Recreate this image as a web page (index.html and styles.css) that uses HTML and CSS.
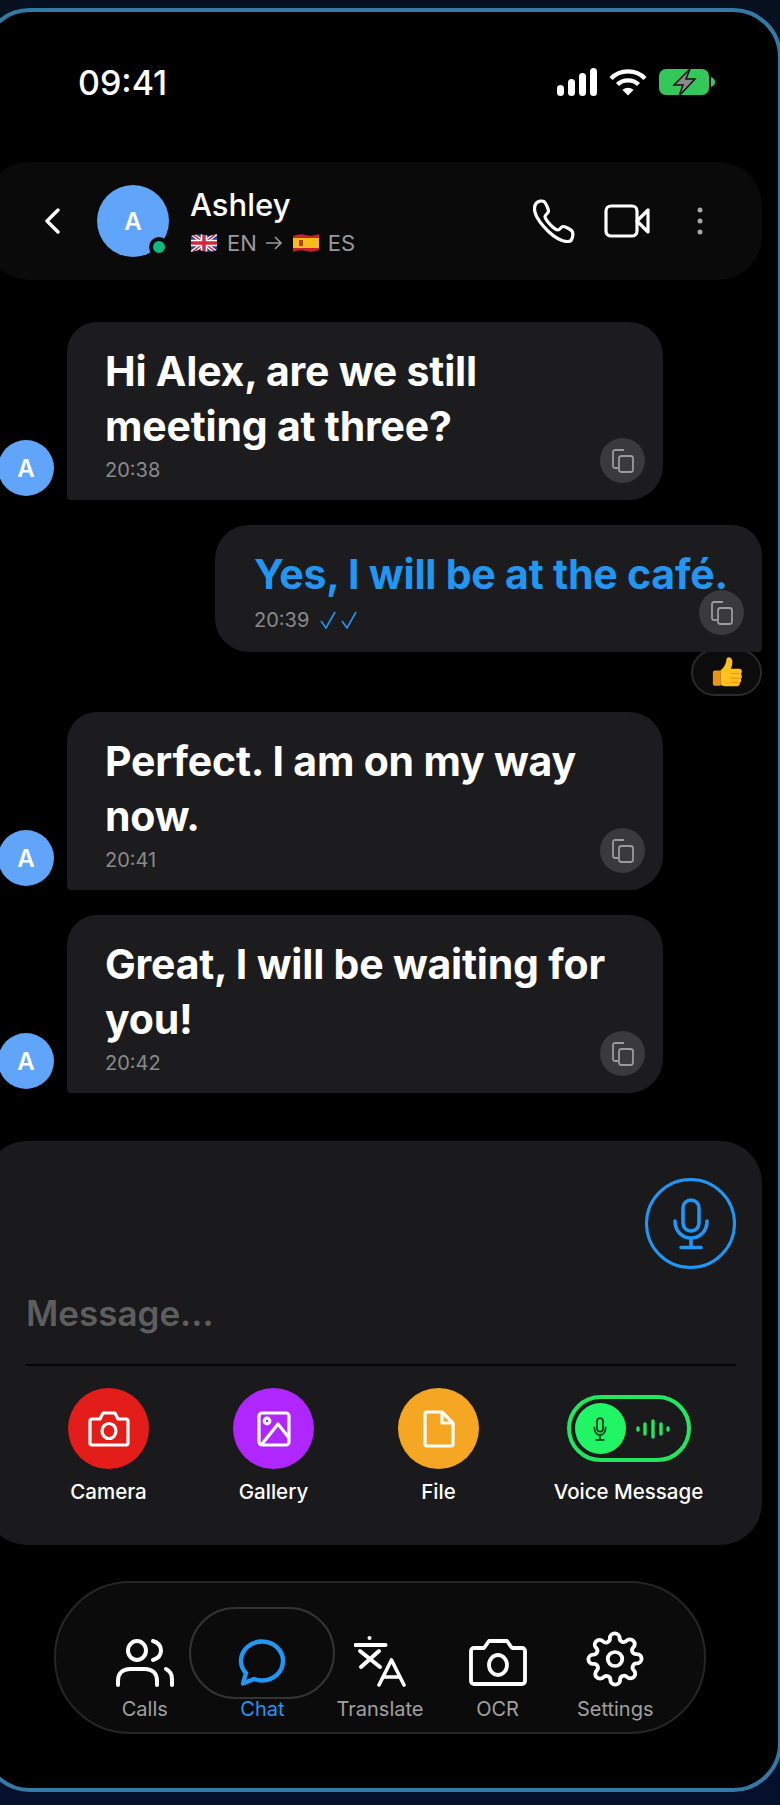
FILE: index.html
```html
<!DOCTYPE html>
<html lang="en">
<head>
  <meta charset="UTF-8" />
  <title>Chat with Ashley</title>
  <link rel="stylesheet" href="styles.css">
</head>
<body>

<div class="phone">

  <div class="status-bar">
    <span class="clock">09:41</span>
    <div class="status-icons">
      <svg width="40" height="28" viewBox="0 0 40 28" fill="#fff">
        <rect x="0" y="17" width="7" height="11" rx="3.5"/>
        <rect x="11" y="11" width="7" height="17" rx="3.5"/>
        <rect x="22" y="5" width="7" height="23" rx="3.5"/>
        <rect x="33" y="0" width="7" height="28" rx="3.5"/>
      </svg>
      <svg width="38" height="28" viewBox="0 0 38 28" fill="none" stroke="#fff" stroke-width="4.4">
        <path d="M2 10.5C11 1 27 1 36 10.5"/>
        <path d="M8.5 16.5C14 11 24 11 29.5 16.5"/>
        <path d="M13.5 22L19 27.5 24.500 22C21 19 17 19 13.500 22Z" fill="#fff" stroke="none"/>
      </svg>
      <svg width="57" height="28" viewBox="0 0 57 28">
        <rect x="0" y="1" width="50" height="26" rx="7" fill="#34c759"/>
        <path d="M52 9c3 1 4 3 4 5s-1 4-4 5z" fill="#34c759"/>
        <path d="M31 1L15 17h9l-4 11 16-17h-9z" fill="#8a8a8a" stroke="#111" stroke-width="1.500"/>
      </svg>
    </div>
  </div>

  <div class="chat-header">
    <svg class="back" width="16" height="26" viewBox="0 0 16 26" fill="none" stroke="#fff" stroke-width="3.400" stroke-linecap="round" stroke-linejoin="round">
      <path d="M14 2L3 13l11 11"/>
    </svg>
    <div class="avatar avatar-big">
      A
      <span class="online"></span>
    </div>
    <div class="contact">
      <div class="contact-name">Ashley</div>
      <div class="contact-lang">
        <svg class="flag-en" width="26" height="20" viewBox="0 0 26 20">
          <clipPath id="wave"><path d="M0 3Q7 0 13 2T26 1V17Q19 20 13 18T0 19Z"/></clipPath>
          <g clip-path="url(#wave)">
            <rect width="26" height="20" fill="#2b3f8c"/>
            <path d="M0 0L26 20M26 0L0 20" stroke="#fff" stroke-width="4"/>
            <path d="M0 0L26 20M26 0L0 20" stroke="#d0283c" stroke-width="1.500"/>
            <path d="M13 0V20M0 10H26" stroke="#fff" stroke-width="6.500"/>
            <path d="M13 0V20M0 10H26" stroke="#d0283c" stroke-width="3.500"/>
          </g>
        </svg>
        <span>EN</span>
        <svg width="18" height="16" viewBox="0 0 18 16" fill="none" stroke="#9a9a9a" stroke-width="1.600">
          <path d="M1 8H16M10 2l6 6-6 6"/>
        </svg>
        <svg class="flag-es" width="26" height="20" viewBox="0 0 26 20">
          <g clip-path="url(#wave)">
            <rect width="26" height="20" fill="#c8202c"/>
            <rect y="5" width="26" height="10" fill="#fbbc1a"/>
            <rect x="6" y="7" width="4" height="6" fill="#a8402a"/>
          </g>
        </svg>
        <span>ES</span>
      </div>
    </div>
    <div class="header-actions">
      <svg width="42" height="44" viewBox="0 0 42 44" fill="none" stroke="#fff" stroke-width="3.200" stroke-linejoin="round">
        <path d="M3 4.500C5 2 9 1.500 11 2.500c1.500 1 4.500 7.500 4.500 9.500 0 2.500-3.500 3.500-3.500 5.500 0 3 9 13.500 13 13.500 2 0 3-3.500 5-3.500 2.500 0 9 3.500 9.500 5.500.8 3-.5 7-1.500 8.500-1.500 1.500-5.500 1.200-9 0C17 37 1 19 1.500 9.500 1.500 7.500 2 6 3 4.500z"/>
      </svg>
      <svg width="46" height="34" viewBox="0 0 46 34" fill="none" stroke="#fff" stroke-width="3.200" stroke-linejoin="round">
        <rect x="2" y="2" width="31" height="30" rx="5"/>
        <path d="M33 17L44 6V28z"/>
      </svg>
      <svg class="dots" width="6" height="28" viewBox="0 0 6 28" fill="#a8a8a8">
        <circle cx="3" cy="3" r="2.500"/>
        <circle cx="3" cy="14" r="2.500"/>
        <circle cx="3" cy="25" r="2.500"/>
      </svg>
    </div>
  </div>

  <div class="messages">

    <div class="row">
      <div class="avatar avatar-small">A</div>
      <div class="bubble">
        <p class="text">Hi Alex, are we still<br>meeting at three?</p>
        <div class="meta"><span>20:38</span></div>
        <button class="copy"><svg width="22" height="24" viewBox="0 0 22 24" fill="none" stroke="#9b9b9b" stroke-width="1.800" stroke-linejoin="round"><path d="M6 19H3a2 2 0 0 1-2-2V3a2 2 0 0 1 2-2h9"/><rect x="7" y="7" width="14" height="16" rx="2.500"/></svg></button>
      </div>
    </div>

    <div class="row row-mine">
      <div class="bubble bubble-mine">
        <p class="text text-mine">Yes, I will be at the café.</p>
        <div class="meta meta-mine">
          <span>20:39</span>
          <svg width="38" height="18" viewBox="0 0 38 18" fill="none" stroke="#2196f3" stroke-width="1.600">
            <path d="M1 10l5 7 9-16M22 10l5 7 9-16"/>
          </svg>
        </div>
        <button class="copy"><svg width="22" height="24" viewBox="0 0 22 24" fill="none" stroke="#9b9b9b" stroke-width="1.800" stroke-linejoin="round"><path d="M6 19H3a2 2 0 0 1-2-2V3a2 2 0 0 1 2-2h9"/><rect x="7" y="7" width="14" height="16" rx="2.500"/></svg></button>
      </div>
      <div class="reaction">
        <svg width="32" height="33" viewBox="0 0 34 34">
          <path d="M4 15h6v16H4a2 2 0 0 1-2-2V17a2 2 0 0 1 2-2z" fill="#e8951a"/>
          <path d="M10 15c4-3 6-7 6.500-12 .3-3 5-3 6 1 .8 3-.5 7-1.500 9h9c3.500 0 3.500 4.500 1.500 5.500 2 1.500 1.500 4.500 0 5 1 2 .5 4-1 4.500.5 2-.5 3.500-3 3.500H15c-2 0-3.500-1-5-1.500z" fill="#fcc21b"/>
          <path d="M21 18h9M21 23h9M21 27.500h8" stroke="#e8951a" stroke-width="1.200" fill="none"/>
        </svg>
      </div>
    </div>

    <div class="row">
      <div class="avatar avatar-small">A</div>
      <div class="bubble">
        <p class="text">Perfect. I am on my way<br>now.</p>
        <div class="meta"><span>20:41</span></div>
        <button class="copy"><svg width="22" height="24" viewBox="0 0 22 24" fill="none" stroke="#9b9b9b" stroke-width="1.800" stroke-linejoin="round"><path d="M6 19H3a2 2 0 0 1-2-2V3a2 2 0 0 1 2-2h9"/><rect x="7" y="7" width="14" height="16" rx="2.500"/></svg></button>
      </div>
    </div>

    <div class="row">
      <div class="avatar avatar-small">A</div>
      <div class="bubble">
        <p class="text">Great, I will be waiting for<br>you!</p>
        <div class="meta"><span>20:42</span></div>
        <button class="copy"><svg width="22" height="24" viewBox="0 0 22 24" fill="none" stroke="#9b9b9b" stroke-width="1.800" stroke-linejoin="round"><path d="M6 19H3a2 2 0 0 1-2-2V3a2 2 0 0 1 2-2h9"/><rect x="7" y="7" width="14" height="16" rx="2.500"/></svg></button>
      </div>
    </div>

  </div>

  <div class="composer">
    <div class="composer-top">
      <button class="mic">
        <svg width="36" height="52" viewBox="0 0 36 52" fill="none" stroke="#2196f3" stroke-width="3.600" stroke-linecap="round">
          <rect x="10" y="2" width="16" height="31" rx="8"/>
          <path d="M2 23c0 10 7 17 16 17s16-7 16-17M18 40v9M8 49.500h20"/>
        </svg>
      </button>
    </div>
    <div class="composer-input">Message...</div>
    <div class="composer-actions">
      <div class="action">
        <div class="action-icon red">
          <svg width="42" height="36" viewBox="0 0 42 36" fill="none" stroke="#fff" stroke-width="3.200" stroke-linejoin="round">
            <path d="M4 8h8l3-6h12l3 6h8a2 2 0 0 1 2 2v22a2 2 0 0 1-2 2H4a2 2 0 0 1-2-2V10a2 2 0 0 1 2-2z"/>
            <ellipse cx="21" cy="20" rx="7" ry="7.500"/>
          </svg>
        </div>
        <span>Camera</span>
      </div>
      <div class="action">
        <div class="action-icon purple">
          <svg width="34" height="36" viewBox="0 0 34 36" fill="none" stroke="#fff" stroke-width="3.200" stroke-linejoin="round">
            <rect x="2" y="2" width="30" height="32" rx="3"/>
            <path d="M5 33l16-20 11 14"/>
            <circle cx="10" cy="10" r="2.800"/>
          </svg>
        </div>
        <span>Gallery</span>
      </div>
      <div class="action">
        <div class="action-icon orange">
          <svg width="32" height="38" viewBox="0 0 32 38" fill="none" stroke="#fff" stroke-width="3.200" stroke-linejoin="round">
            <path d="M4 2h15l11 11v21a2 2 0 0 1-2 2H4a2 2 0 0 1-2-2V4a2 2 0 0 1 2-2z"/>
            <path d="M19 2v11h11"/>
          </svg>
        </div>
        <span>File</span>
      </div>
      <div class="action">
        <div class="voice-toggle">
          <div class="voice-knob">
            <svg width="14" height="24" viewBox="0 0 18 32" fill="none" stroke="#0f3d1e" stroke-width="2.400" stroke-linecap="round">
              <rect x="5" y="1.500" width="8" height="18" rx="4"/>
              <path d="M1.500 14c0 6 3 10 7.500 10s7.500-4 7.500-10M9 24v6M4 30.500h10"/>
            </svg>
          </div>
          <svg width="34" height="20" viewBox="0 0 34 20" fill="none" stroke="#22e65f" stroke-width="3.400" stroke-linecap="round">
            <path d="M2 9v2M9 5v10M17 2v16M25 5v10M32 9v2"/>
          </svg>
        </div>
        <span>Voice Message</span>
      </div>
    </div>
  </div>

  <nav class="tabbar">
    <div class="tab">
      <svg width="58" height="48" viewBox="0 0 58 48" fill="none" stroke="#fff" stroke-width="4" stroke-linecap="round">
        <ellipse cx="21" cy="11.500" rx="9" ry="9.500"/>
        <path d="M37 2c5 1.500 8 5 8 9.500s-3 8-8 9.500"/>
        <path d="M2 46v-4c0-8 5-12 12-12h15c7 0 12 4 12 12v4"/>
        <path d="M50 30c4 2 6 6 6 10v6"/>
      </svg>
      <span>Calls</span>
    </div>
    <div class="tab tab-active">
      <span class="tab-pill"></span>
      <svg width="48" height="48" viewBox="0 0 48 48" fill="none" stroke="#2196f3" stroke-width="4.400" stroke-linejoin="round">
        <path d="M24 2.500c11.500 0 21 8.500 21 19.500s-9.500 19.500-21 19.500c-3 0-5.500-.5-8-1.500l-11 4.500 3-10.500C5 31 3 27 3 22 3 11 12.500 2.500 24 2.500z"/>
      </svg>
      <span>Chat</span>
    </div>
    <div class="tab">
      <svg width="52" height="51" viewBox="0 0 52 51" fill="none" stroke="#fff" stroke-width="3.600" stroke-linecap="round" stroke-linejoin="round">
        <path d="M1.500 9h30" stroke-width="4"/>
        <circle cx="15.500" cy="2" r="2" fill="#fff" stroke="none"/>
        <path d="M6 15l20 16M25 15L7 31" stroke-width="4"/>
        <path d="M25 49L37.500 24 50 49M30 41h15"/>
      </svg>
      <span>Translate</span>
    </div>
    <div class="tab">
      <svg width="58" height="48" viewBox="0 0 58 48" fill="none" stroke="#fff" stroke-width="3.800" stroke-linejoin="round">
        <path d="M5 9h10l5-7h18l5 7h10a3 3 0 0 1 3 3v30a3 3 0 0 1-3 3H5a3 3 0 0 1-3-3V12a3 3 0 0 1 3-3z"/>
        <ellipse cx="29" cy="26" rx="9" ry="10"/>
      </svg>
      <span>OCR</span>
    </div>
    <div class="tab">
      <svg width="58" height="56" viewBox="0 0 24 24" fill="none" stroke="#fff" stroke-width="1.600" stroke-linejoin="round" preserveAspectRatio="none">
        <circle cx="12" cy="12" r="3"/>
        <path d="M19.400 15a1.650 1.650 0 0 0 .33 1.820l.06.06a2 2 0 1 1-2.830 2.830l-.06-.06a1.650 1.650 0 0 0-2.800 1.170V21a2 2 0 1 1-4 0v-.09a1.650 1.650 0 0 0-2.800-1.170l-.06.06a2 2 0 1 1-2.830-2.830l.06-.06a1.650 1.650 0 0 0-1.170-2.800H3a2 2 0 1 1 0-4h.09a1.650 1.650 0 0 0 1.170-2.800l-.06-.06a2 2 0 1 1 2.830-2.830l.06.06a1.650 1.650 0 0 0 2.800-1.170V3a2 2 0 1 1 4 0v.09a1.650 1.650 0 0 0 2.800 1.170l.06-.06a2 2 0 1 1 2.830 2.830l-.06.06a1.650 1.650 0 0 0 1.170 2.800H21a2 2 0 1 1 0 4h-.09a1.650 1.650 0 0 0-1.510 1.110z"/>
      </svg>
      <span>Settings</span>
    </div>
  </nav>

</div>

</body>
</html>
```

FILE: styles.css
```css
html, body {
  height: 100%;
}

body {
  font-family: "Inter", "Liberation Sans", sans-serif;
  background: linear-gradient(#07101f, #050a16 50%, #04102c);
  margin: 0;
  overflow: hidden;
  color: #fff;
}

/* the frame runs off the left edge of the window */
.phone {
  box-sizing: border-box;
  width: 801px;
  height: 1784px;
  margin: 8px 0 0 -19px;
  padding: 0 16px 0 0;
  border: 4px solid #337ba6;
  border-radius: 49px;
  background: #000;
}

.status-bar {
  display: flex;
  justify-content: space-between;
  align-items: center;
  height: 36px;
  margin-top: 52px;
  padding: 0 46px 0 93px;
}

.clock {
  font-size: 34px;
  font-weight: 500;
}

.status-icons {
  display: flex;
  align-items: center;
  gap: 12px;
}

.chat-header {
  display: flex;
  align-items: center;
  height: 118px;
  margin-top: 62px;
  padding: 0 0 0 59px;
  background: #0a0a0a;
  border-radius: 44px;
}

.back {
  flex: none;
}

.avatar {
  display: flex;
  justify-content: center;
  align-items: center;
  flex: none;
  border-radius: 50%;
  background: #60a5fa;
  font-weight: 600;
}

.avatar-big {
  position: relative;
  width: 72px;
  height: 72px;
  margin-left: 37px;
  font-size: 24px;
}

.online {
  position: absolute;
  right: 0;
  bottom: 0;
  width: 12px;
  height: 12px;
  border: 4px solid #0a0a0a;
  border-radius: 50%;
  background: #10b981;
}

.contact {
  margin-left: 21px;
}

.contact-name {
  font-size: 31px;
  font-weight: 500;
  line-height: 36px;
}

.contact-lang {
  display: flex;
  align-items: center;
  gap: 8px;
  margin-top: 7px;
  color: #9a9a9a;
  font-size: 22px;
  line-height: 26px;
}

.flag-en {
  margin: 0 2px 0 1px;
}

.flag-es {
  margin: 0 1px 0 2px;
}

.header-actions {
  display: flex;
  align-items: center;
  margin-left: auto;
  padding-right: 59px;
}

.header-actions svg + svg {
  margin-left: 29px;
}

.header-actions .dots {
  margin-left: 47px;
}

.messages {
  display: flex;
  flex-direction: column;
  margin-top: 42px;
}

.row {
  display: flex;
  align-items: flex-end;
  gap: 13px;
  margin-bottom: 25px;
}

.row-mine {
  flex-direction: column;
  gap: 0;
  margin-bottom: 16px;
}

.avatar-small {
  width: 56px;
  height: 56px;
  margin: 0 0 4px 13px;
  font-size: 24px;
}

.bubble {
  position: relative;
  box-sizing: border-box;
  width: 596px;
  padding: 22px 20px 18px 38px;
  background: #1c1c1e;
  border-radius: 30px 34px 34px 4px;
}

.bubble-mine {
  width: 547px;
  padding-left: 39px;
  border-radius: 34px 30px 4px 34px;
}

.text {
  margin: 0;
  font-size: 41px;
  font-weight: 650;
  letter-spacing: -0.2px;
  line-height: 55px;
  white-space: nowrap;
}

.text-mine {
  color: #2196f3;
}

.meta {
  display: flex;
  align-items: center;
  gap: 11px;
  height: 24px;
  margin-top: 4px;
  color: #8a8a8a;
  font-size: 20px;
}

.meta-mine {
  height: 28px;
}

.copy {
  position: absolute;
  right: 18px;
  bottom: 17px;
  display: flex;
  justify-content: center;
  align-items: center;
  width: 45px;
  height: 45px;
  padding: 0;
  border: 0;
  border-radius: 50%;
  background: #3a3a3c;
}

.reaction {
  display: flex;
  justify-content: center;
  align-items: center;
  box-sizing: border-box;
  width: 71px;
  height: 47px;
  margin-top: -3px;
  border: 2px solid #2a2a2c;
  border-radius: 24px;
  background: #0c0c0c;
}

.composer {
  height: 404px;
  box-sizing: border-box;
  margin-top: 23px;
  padding: 37px 26px 0 41px;
  background: #1a1a1c;
  border-radius: 42px;
}

.composer-top {
  display: flex;
  justify-content: flex-end;
}

.mic {
  display: flex;
  justify-content: center;
  align-items: center;
  width: 91px;
  height: 91px;
  padding: 0;
  border: 3px solid #2196f3;
  border-radius: 50%;
  background: transparent;
}

.composer-input {
  margin-top: 22px;
  padding-bottom: 29px;
  border-bottom: 2px solid #060606;
  color: #5e5e5e;
  font-size: 35px;
  font-weight: 600;
  line-height: 44px;
}

.composer-actions {
  display: grid;
  grid-template-columns: 165px 165px 165px 1fr;
  margin-top: 22px;
  justify-items: center;
}

.action {
  display: flex;
  flex-direction: column;
  align-items: center;
  width: 165px;
  font-size: 20.5px;
  font-weight: 500;
}

.action span {
  margin-top: 11px;
  line-height: 24px;
}

.action-icon {
  display: flex;
  justify-content: center;
  align-items: center;
  width: 81px;
  height: 81px;
  border-radius: 50%;
}

.red { background: #e21d1a; }
.purple { background: #b026ff; }
.orange { background: #f5a623; }

.voice-toggle {
  display: flex;
  align-items: center;
  box-sizing: border-box;
  width: 124px;
  height: 67px;
  margin: 7px 0;
  padding: 0 4px;
  border: 4px solid #22e65f;
  border-radius: 34px;
  gap: 10px;
}

.voice-knob {
  display: flex;
  justify-content: center;
  align-items: center;
  width: 51px;
  height: 51px;
  border-radius: 50%;
  background: #22f565;
}

.tabbar {
  display: grid;
  grid-template-columns: repeat(5, 1fr);
  box-sizing: border-box;
  width: 652px;
  height: 153px;
  margin: 36px 0 0 69px;
  padding: 0 30px;
  border: 2px solid #262626;
  border-radius: 76px;
  background: #0b0b0b;
}

.tab {
  position: relative;
  display: flex;
  flex-direction: column;
  align-items: center;
  justify-content: flex-end;
  height: 138px;
  color: #a0a0a0;
  font-size: 20px;
}

.tab span {
  line-height: 24px;
}

.tab svg {
  margin-bottom: 10px;
}

.tab-active {
  color: #2196f3;
}

.tab .tab-pill {
  position: absolute;
  top: 24px;
  left: 50%;
  width: 146px;
  height: 92px;
  margin-left: -73px;
  border: 2px solid #333;
  border-radius: 46px;
  box-sizing: border-box;
}
```
